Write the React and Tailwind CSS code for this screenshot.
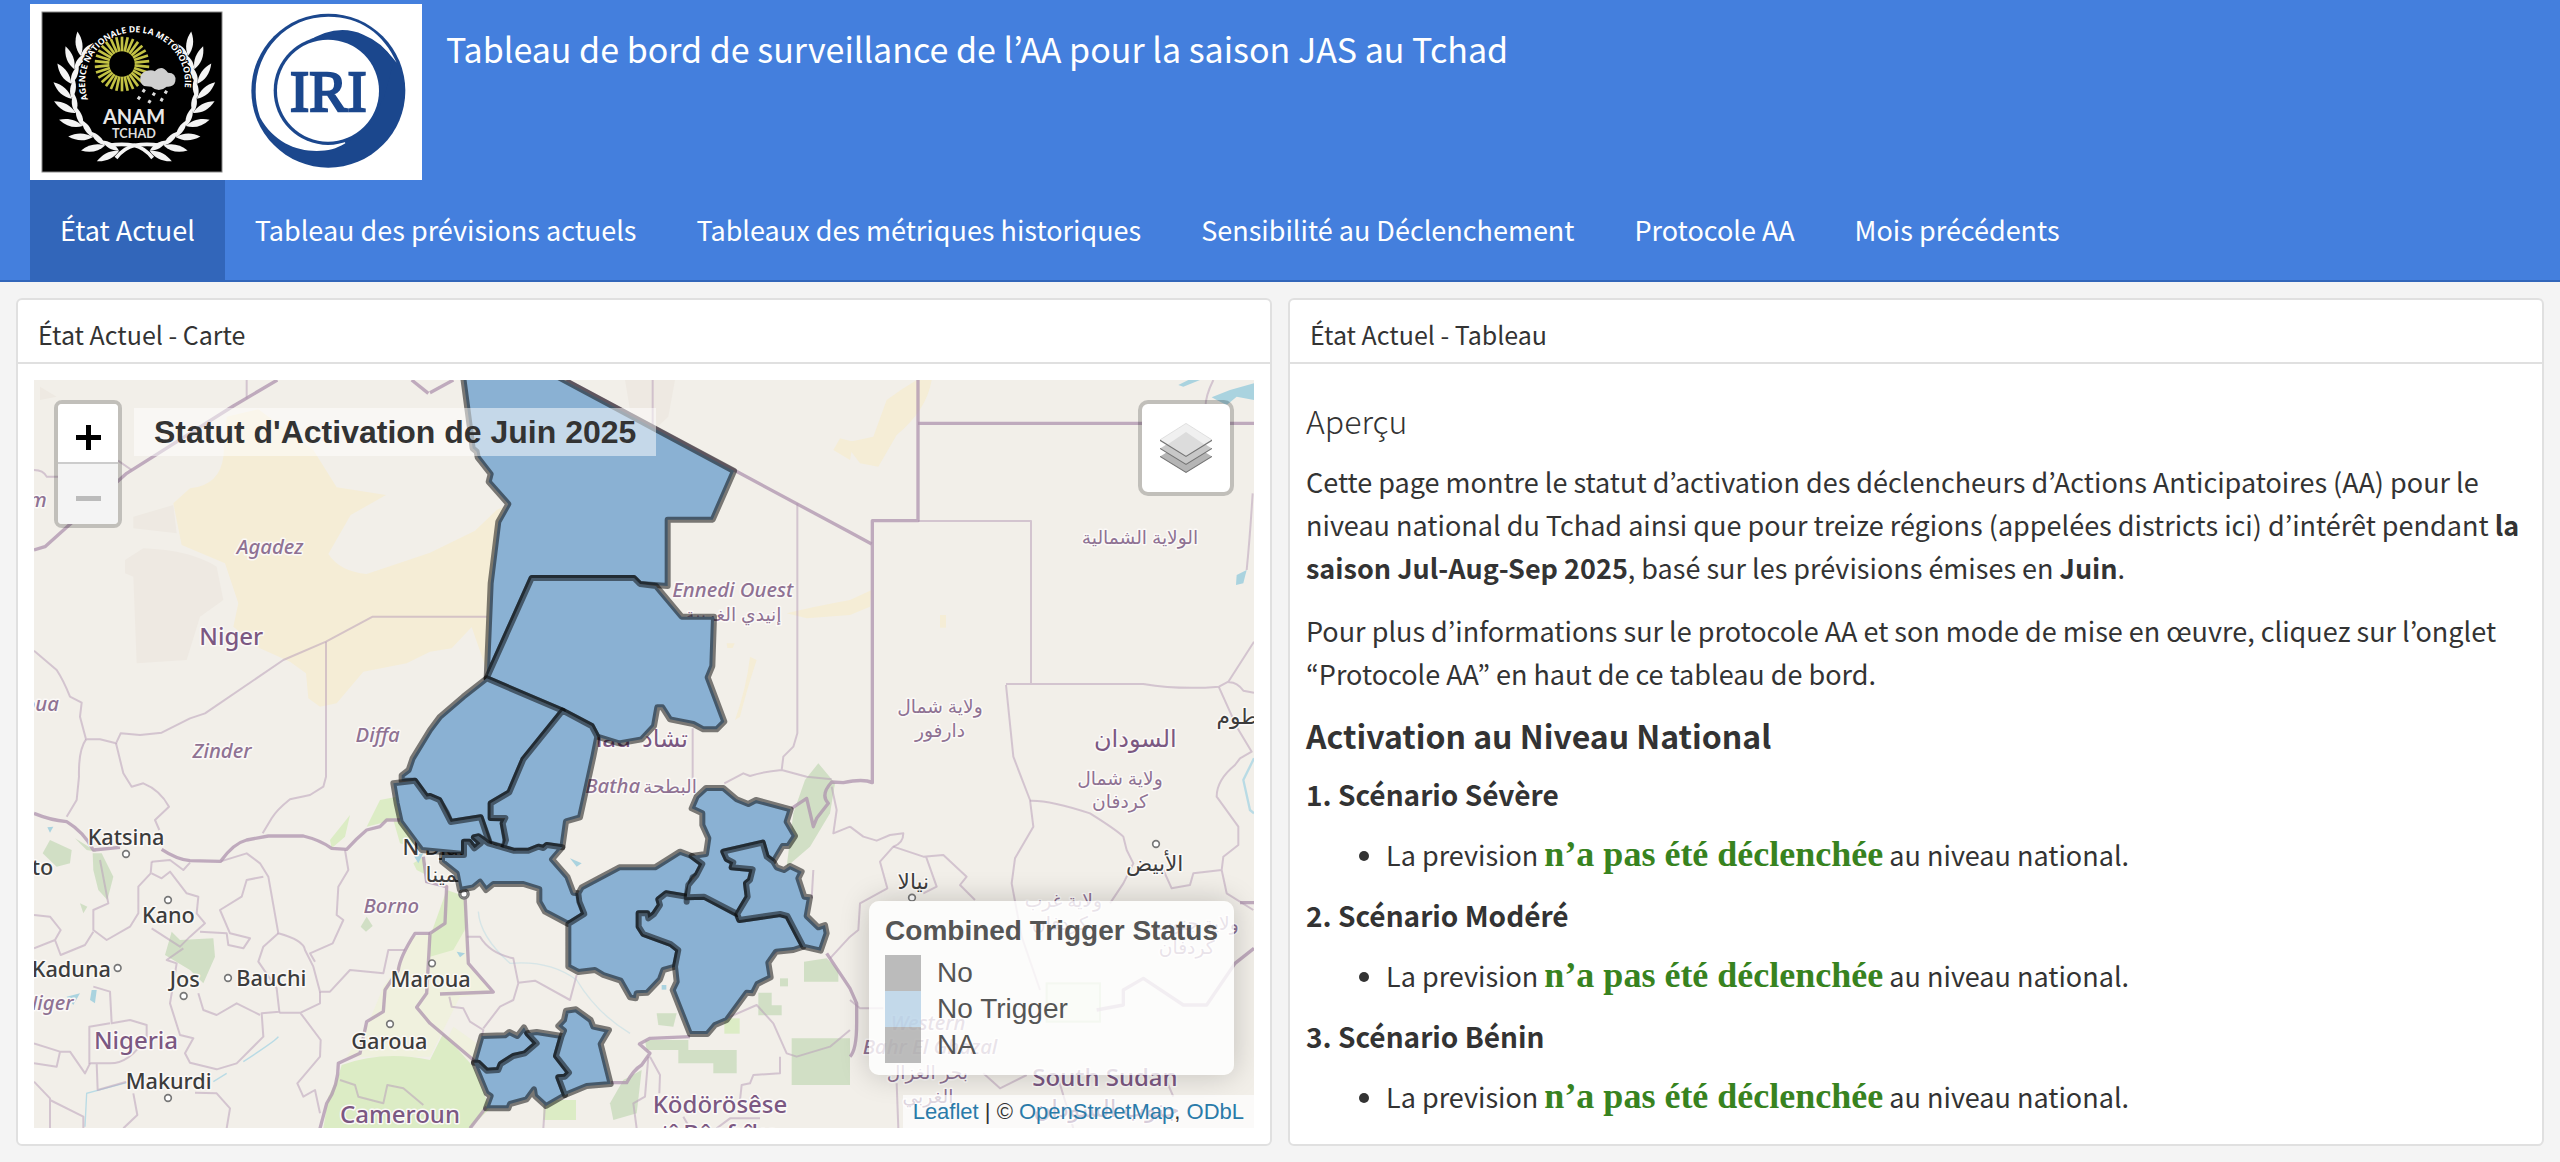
import React from "react";

const SANS = "font-['Noto_Sans_CJK_KR','Open_Sans',sans-serif]";

const LEAVES = Array.from({ length: 9 }, (_, i) => i);

function AnamLogo() {
  const rays = Array.from({ length: 30 }, (_, i) => i * 12);
  const leaf = "M0 0 C-14 -18 -18 -40 -10 -66 C4 -46 8 -22 0 0Z";
  const branch = LEAVES.map((i) => {
    const a = ((104 + i * 13.5) * Math.PI) / 180;
    const x = 403 + 190 * Math.cos(a);
    const y = 268 + 190 * Math.sin(a);
    const dir = 104 + i * 13.5 + 180;
    return (
      <g key={i} transform={`translate(${x} ${y})`}>
        <path d={leaf} transform={`rotate(${dir - 30}) scale(1.2 1.1)`} />
        <path d={leaf} transform={`rotate(${dir + 26}) scale(1 .9)`} />
      </g>
    );
  });
  return (
    <g>
      <rect x="126" y="36" width="540" height="480" fill="#000" stroke="#888" strokeWidth="3" />
      <g fill="#f4f4f4">
        {branch}
        <g transform="translate(806 0) scale(-1 1)">{branch}</g>
      </g>
      <g fill="none" stroke="#f4f4f4" strokeWidth="11">
        <path d="M348 474 Q372 444 404 436 Q440 430 480 436" />
        <path d="M458 474 Q434 444 402 436 Q366 430 326 436" />
      </g>
      <path id="anam-arc" d="M264 298 A150 150 0 1 1 530 330" fill="none" />
      <text fill="#fff" fontSize="30" fontWeight="700" fontFamily="Liberation Sans Narrow, Open Sans, sans-serif" stroke="#000" strokeWidth="6" paintOrder="stroke">
        <textPath href="#anam-arc">
          <tspan fontSize="26">AGENCE NATIONALE DE LA METOROLOGIE</tspan>
        </textPath>
      </text>
      <g stroke="#c3c244" strokeWidth="8">
        {rays.map((r) => (
          <path key={r} d="M366 154 V110" transform={`rotate(${r} 366 192)`} />
        ))}
      </g>
      <path d="M432 258 a25 25 0 0 1 4 -44 q20 -6 28 0 q22 -22 40 4 q26 0 22 26 q-4 18 -26 16 q-24 20 -46 0z" fill="#cfcfcf" />
      <g stroke="#ddd" strokeWidth="9" strokeDasharray="10 16">
        <path d="M434 268 L410 304" />
        <path d="M464 278 L442 316" />
        <path d="M500 272 L478 312" />
      </g>
      <text x="402" y="371" textAnchor="middle" fill="#e8e8e8" fontSize="60" fontWeight="700" fontFamily="Lato, sans-serif">ANAM</text>
      <text x="402" y="414" textAnchor="middle" fill="#ddd" fontSize="38" fontWeight="700" fontFamily="Lato, sans-serif">TCHAD</text>
    </g>
  );
}

function Logos() {
  return (
    <svg viewBox="90 12 1176 528" className="block h-[176px] w-[392px] bg-white" role="img" aria-label="ANAM Tchad, IRI">
      <AnamLogo />
      <circle cx="985" cy="272" r="231" fill="#1b478d" />
      <path d="M1190 188 C1150 100 1080 50 985 50 C860 50 767 150 767 275 C767 300 771 325 780 352 C820 425 885 453 950 453 C985 453 1008 447 1036 430 L930 125 Q985 85 1050 95 Q1130 110 1190 188Z" fill="#fff" />
      <circle cx="984" cy="272" r="163" fill="#1b478d" />
      <path d="M920 126 Q1010 68 1090 104 Q1150 128 1182 182 L1150 300 L1040 420 Z" fill="#1b478d" />
      <circle cx="984" cy="272" r="153" fill="#fff" />
      <text x="985" y="334" textAnchor="middle" fill="#1b478d" stroke="#1b478d" strokeWidth="7" fontSize="172" fontFamily="Liberation Serif, serif">IRI</text>
    </svg>
  );
}

const NAV = [
  "État Actuel",
  "Tableau des prévisions actuels",
  "Tableaux des métriques historiques",
  "Sensibilité au Déclenchement",
  "Protocole AA",
  "Mois précédents",
];

const DISTRICTS = [
  "1298,10 1328,235 1340,245 1343,262 1382,312 1376,335 1435,402 1405,455 1382,640 1370,925 1505,624 1812,624 1830,642 1913,648 1913,449 2048,449 2112,303 1564,10",
  "1370,925 1505,624 1812,624 1830,642 1878,648 1955,740 2052,740 2047,888 2033,922 2083,1055 2060,1078 2020,1078 1990,1062 1920,1048 1897,1012 1882,1012 1872,1068 1835,1108 1767,1120 1702,1100 1685,1068 1598,1022",
  "1370,925 1598,1022 1480,1168 1438,1267 1382,1300 1382,1344 1426,1346 1418,1360 1428,1420 1422,1432 1380,1420 1352,1342 1262,1356 1250,1328 1228,1290 1200,1278 1190,1280 1155,1232 1115,1232 1115,1216 1136,1200 1148,1165 1200,1080 1230,1040 1300,980",
  "1598,1022 1685,1068 1702,1100 1690,1160 1650,1342 1608,1354 1597,1432 1550,1425 1540,1434 1525,1430 1495,1442 1450,1442 1420,1432 1428,1410 1418,1360 1426,1344 1382,1344 1382,1300 1438,1267 1480,1168",
  "1155,1232 1090,1240 1100,1300 1112,1355 1175,1440 1302,1452 1302,1415 1318,1415 1333,1435 1352,1420 1332,1402 1345,1400 1378,1420 1352,1342 1262,1356 1228,1290 1200,1278 1190,1280",
  "1236,1455 1302,1455 1302,1415 1318,1415 1333,1435 1352,1420 1332,1402 1345,1398 1375,1420 1450,1442 1495,1442 1525,1430 1540,1434 1550,1425 1597,1432 1566,1468 1612,1520 1630,1568 1645,1570 1650,1595 1663,1632 1615,1662 1545,1625 1528,1595 1528,1557 1480,1542 1390,1542 1368,1560 1350,1535 1330,1552 1290,1560 1280,1510 1236,1475",
  "1615,1662 1663,1632 1648,1595 1645,1570 1655,1552 1768,1492 1875,1492 1950,1445 1985,1458 2017,1482 2000,1515 1988,1522 1970,1580 1908,1570 1885,1588 1890,1605 1872,1632 1855,1645 1852,1630 1826,1630 1826,1670 1840,1692 1922,1722 1945,1740 1935,1790 1900,1800 1890,1828 1852,1868 1820,1870 1817,1885 1800,1882 1772,1832 1720,1815 1695,1800 1645,1806 1615,1790",
  "1970,1595 1970,1580 1908,1570 1885,1588 1890,1605 1872,1632 1855,1645 1852,1630 1826,1630 1826,1670 1840,1692 1922,1722 1945,1740 1935,1790 1940,1835 1928,1860 1980,1992 2032,1992 2055,1965 2090,1950 2150,1868 2168,1870 2182,1842 2222,1822 2215,1778 2238,1745 2290,1740 2320,1730 2272,1638 2250,1632 2128,1650 2120,1632 2022,1580 1970,1582",
  "1985,1315 2000,1280 2028,1254 2080,1254 2120,1288 2155,1302 2178,1290 2282,1318 2270,1355 2295,1398 2275,1428 2258,1428 2230,1475 2210,1460 2198,1418 2080,1445 2090,1467 2110,1477 2105,1492 2168,1498 2160,1530 2148,1540 2153,1580 2122,1632 2022,1580 1970,1582 1975,1545 2000,1515 2017,1482 1985,1458 2028,1452 2035,1405 2017,1365 2017,1330",
  "2230,1475 2240,1492 2262,1500 2280,1488 2315,1505 2305,1525 2323,1580 2340,1582 2330,1638 2365,1672 2385,1665 2390,1690 2372,1742 2320,1730 2272,1638 2250,1632 2128,1650 2122,1632 2153,1580 2148,1540 2160,1530 2168,1498 2105,1492 2110,1477 2090,1467 2080,1445 2198,1418 2210,1460",
  "1355,1998 1425,1996 1438,1986 1462,1998 1482,1972 1492,1990 1520,2020 1485,2050 1450,2058 1412,2082 1405,2100 1370,2102 1345,2078 1332,2078",
  "1332,2078 1345,2078 1370,2102 1405,2100 1412,2082 1450,2058 1485,2050 1520,2020 1492,1990 1520,1986 1595,1998 1578,2058 1617,2108 1605,2120 1585,2122 1605,2175 1548,2208 1515,2178 1512,2158 1490,2188 1440,2202 1435,2215 1368,2215 1382,2178 1370,2170",
  "1595,1998 1602,1982 1585,1968 1602,1950 1608,1922 1638,1918 1682,1950 1690,1970 1737,1980 1712,2022 1742,2142 1670,2148 1605,2175 1585,2122 1605,2120 1617,2108 1578,2058",
];

const DESERT = [
  "M590 140 L685 118 L850 240 L920 352 L1068 375 L962 435 L895 552 Q930 605 1010 612 L1200 548 L1335 482 L1400 420 L1420 410 L1400 520 L1370 900 L1300 700 L1345 750 L1265 835 L1200 845 L1130 880 L1000 905 L920 1000 L870 1010 L835 985 L828 910 L780 875 L690 835 L610 770 L625 700 L585 580 L455 525 L430 400 L480 355 Q570 345 580 260Z",
  "M2660 30 L2705 30 Q2690 120 2600 195 L2545 290 L2490 280 L2460 240 L2460 215 L2530 200 L2570 90 Q2610 60 2660 30Z",
  "M2270 730 Q2350 710 2460 690 L2525 660 L2520 710 L2460 735 L2330 745Z",
  "M2410 240 L2430 205 L2470 215 L2460 270Z",
  "M2730 735 h18 v38 h-18z",
  "M2090 820 h24 l-6 14 h-16z",
  "M2160 860 L2180 870 Q2150 960 2130 1040 L2115 1050 Q2150 950 2160 860Z",
];

const SCRUB = [
  "M310 440 L430 405 L440 490 L310 475Z",
  "M340 535 Q480 540 560 590 L580 690 L510 740 L470 870 L320 880 L310 620 L285 610 L285 570Z",
  "M30 50 L80 80 L30 90Z",
  "M1785 30 H1935 L1915 140 L1860 190 L1800 120Z",
];

const FOREST = [
  "M60 1410 L125 1440 L120 1480 L80 1490 L38 1450Z",
  "M188 1450 L215 1450 L250 1520 L232 1590 L205 1560 L190 1500Z",
  "M135 1405 L200 1445 L170 1440Z",
  "M425 1685 L450 1710 L550 1705 L555 1760 L520 1840 L480 1800 L405 1755Z",
  "M1010 1640 L1028 1668 L1008 1685 L992 1670Z",
  "M150 1600 L172 1610 L160 1630Z",
  "M1880 1930 L1940 1930 L1930 1970 L1885 1965Z",
  "M2285 2005 H2460 V2145 H2285Z",
  "M2250 1825 h24 v24 h-24z",
  "M2325 1230 L2365 1180 L2415 1240 L2400 1330 L2340 1430 L2270 1490 L2290 1330Z",
  "M1740 2200 L1780 2130 L1835 2100 L1820 2230 L1750 2250Z",
  "M1845 2010 H1975 V2040 H2120 V2110 H2050 V2080 H1945 V2040 H1850Z",
  "M2185 1868 h40 v38 h30 v30 h-70z",
  "M2322 1775 L2390 1765 L2425 1800 V1835 H2322Z",
];

const GRASS = [
  "M935 2085 Q1060 2040 1200 2070 L1240 1990 L1330 2090 L1380 2215 L1320 2275 H880 L895 2180 L925 2120Z",
  "M1050 1290 L1100 1280 L1140 1400 L1180 1440 L1110 1420 L1090 1350 L1010 1370Z",
  "M900 1410 L960 1335 L945 1400 L905 1435Z",
  "M1250 1560 L1310 1580 L1310 1670 L1270 1740 L1200 1760 L1200 1700Z",
  "M1150 1480 L1180 1460 L1200 1520 L1160 1500Z",
  "M2083 1945 h46 v46 h-46z",
  "M1540 2190 h98 v60 h-98z",
];

const PALE_GRASS = [
  "M1150 1700 L1200 1690 L1310 1670 L1320 1790 L1390 1870 L1290 1880 L1200 2060 L950 2060 L1015 1960 L1060 1850 L1110 1780Z",
  "M1340 2020 L1270 1970 L1250 2010 L1330 2080Z",
];

const MAJOR_BORDERS = [
  "M742 30 L610 108 L290 310 L110 472 L45 530 L12 540",
  "M1200 68 L1270 30",
  "M1145 30 L1195 70",
  "M1610 30 L2112 300 L2460 487 L2525 522",
  "M2664 30 V452 H2527 V1238 Q2500 1225 2440 1238 L2405 1236 Q2370 1275 2395 1300 L2360 1345 L2350 1370 L2330 1285 L2285 1315",
  "M2664 160 H3672",
  "M12 1330 Q60 1350 110 1355 Q160 1385 190 1440 L270 1432 M395 1438 Q440 1468 480 1472 L572 1474 Q610 1420 650 1410 L715 1398 L820 1398 Q870 1410 905 1435 L950 1438 Q980 1405 1010 1380 L1050 1370 L1070 1350 L1110 1350",
  "M1200 1690 L1155 1690 Q1110 1760 1105 1800 L1065 1860 L1060 1925 L1010 1955 L990 2050 L925 2080 Q925 2150 890 2200 L870 2275",
  "M1180 1460 L1190 1535 L1250 1550 L1245 1660 L1200 1690 L1190 1870 L1160 1912 L1200 1960 L1340 2078",
  "M1305 1575 L1315 1780 L1390 1866 L1230 1872",
  "M1742 2138 H1790 Q1810 2100 1835 2085 L1860 2050 L1828 2022 L1860 2005 L1980 2000",
  "M2390 1750 L2460 1855 L2480 1900 V1960 Q2480 2040 2460 2060",
  "M2200 1780 L2240 1740",
  "M3630 1598 H3672 M3672 1735 L3615 1780 L3530 1905 H3460 L3340 1825 L3280 1860 V1905 L3200 1920",
  "M1320 2275 L1370 2210",
];

const MINOR_BORDERS = [
  "M650 30 V86",
  "M12 300 Q40 300 50 320 H84 M264 272 L305 300",
  "M1370 740 H1028 L888 815 L760 870 L525 1030 L480 1045 L395 1088 L330 1095 L272 1090 L258 1120 L210 1108 H168 L150 1040 L155 998 L120 980 Q100 930 80 900 L12 842",
  "M888 815 V1220 L880 1250 L840 1275 L780 1288 Q740 1320 725 1345 L698 1390",
  "M168 1108 Q145 1140 147 1220 L140 1290 L110 1340",
  "M258 1120 L280 1210 L305 1250 L340 1240 Q390 1260 417 1310 L375 1350 L388 1380",
  "M1370 925 L1260 1040",
  "M1868 30 V210",
  "M2302 400 V1090 L2290 1130 L2260 1160 L2255 1200 Q2200 1205 2160 1218 L2140 1210 L2083 1240 M2255 1200 L2330 1220 L2405 1228",
  "M1988 1075 V1255",
  "M2664 453 H3003 V942 M2928 942 H3340 Q3450 960 3567 950 L3595 935 L3672 815 M3595 937 Q3620 935 3640 962 L3672 968",
  "M2928 945 L2950 1160 L3000 1290 L3010 1370 L2955 1465 L2945 1540 L2975 1700 L3030 1860",
  "M3567 952 L3620 1070 L3665 1145 L3630 1165 L3615 1185 Q3560 1230 3560 1280 L3625 1370 V1425 L3580 1460 L3575 1500 L3490 1510 L3480 1545 L3425 1555 L3400 1500 M3575 1500 L3590 1570 L3670 1620",
  "M3550 30 Q3520 90 3528 130 M3668 370 Q3660 500 3650 600",
  "M3000 1292 Q3060 1290 3180 1330 Q3260 1380 3280 1400 L3290 1440 L3310 1480 L3280 1540 L3240 1600",
  "M2460 1370 L2500 1400 L2540 1412 L2580 1395 L2620 1390 Q2620 1420 2590 1430 L2550 1475 L2572 1555 L2490 1600 L2485 1680 L2460 1700",
  "M2590 1430 L2680 1460 L2740 1455 L2810 1520 L2790 1545 L2835 1590 M2688 1460 L2720 1550 L2680 1570",
  "M365 1475 L362 1510 L325 1550 V1630 L300 1670 L230 1710 L190 1680 L190 1620 L235 1600 L210 1470",
  "M365 1475 L420 1470 L460 1500 L480 1478 M365 1510 L395 1525 L420 1505 L470 1570 L505 1580 L500 1630 L525 1660 L480 1700 L450 1730 L365 1675",
  "M572 1474 L650 1450 L690 1480 L715 1520 L745 1690 Q820 1710 825 1740 L850 1790 L870 1865 H900 L960 1800 L1060 1810 L1075 1740 L1125 1740",
  "M700 1520 L650 1530 L635 1580 L570 1620 L600 1690 L660 1705 L640 1735 L595 1725 L590 1690 L510 1685",
  "M945 1440 L955 1500 L925 1550 L920 1635 L940 1650 L908 1720 L840 1750 L855 1775",
  "M745 1690 L700 1730 L685 1775 L740 1855 L748 1925 L695 1930 L700 2000 L620 2080 L560 2098 L480 2078 L465 2050 L490 2005 L450 1995 L420 1900 L440 1780 L410 1770 L460 1735",
  "M748 1928 H812 L870 1900 V1865 M812 1930 L872 2010 L870 2060 L802 2140 L820 2180 L855 2160 L870 2230",
  "M505 1870 L520 1920 L560 1935 L620 1900 L690 1935",
  "M190 1850 L240 1865 L245 1960 L300 1950 L350 1965 V2000 Q300 2080 240 2080 H178 V1970 L240 1960 M200 2080 L203 2160 L290 2135",
  "M12 1635 L60 1640 L92 1680 L75 1710 L12 1735 M75 1710 L92 1755 L165 1725 L190 1685",
  "M12 2020 L90 2045 L120 2045 L165 2110 L180 2080 M12 2080 L80 2090 L90 2045 M12 2135 L60 2185 V2275 M60 2190 L160 2240 V2275 M310 2170 L322 2235 L280 2275 M495 2168 L560 2170 L600 2215 L590 2275",
  "M930 2130 L975 2145 L985 2180 L1060 2200 L1072 2145 L1120 2155 L1180 2205",
  "M1310 1700 L1350 1700 Q1380 1750 1450 1765 L1465 1840 L1450 1890 L1410 1910 L1360 1975 M1465 1838 L1515 1832 L1620 1890 L1640 1815",
  "M1258 1880 L1265 1910 L1300 1915 L1320 1955 L1360 1980 L1355 2000",
  "M1855 2060 L1845 2180 L1810 2200 L1820 2275 M1860 2060 L1890 2115 L1888 2170 M1545 2200 L1540 2275",
  "M2055 1960 L2180 1905 L2230 1960 L2270 2050 L2300 2060 L2400 2030 L2460 1980 M2250 2060 V2110 L2170 2115 L2160 2140 L2135 2145 L2130 2190 M1980 2275 L1960 2240 M2060 2275 L2100 2245 H2190",
  "M2400 1765 L2460 1700 M2460 1890 L2490 1915 H2560",
  "M2405 1250 L2420 1320 L2410 1390 L2460 1370 M2345 1585 L2350 1500",
  "M2600 2140 L2605 2275 M2860 2110 L2910 2155 L2990 2115",
  "M3080 2110 L3130 2275 M3400 2110 L3430 2180",
];

const WATER = [
  "M3545 82 L3600 60 L3672 40 L3672 90 L3620 80 L3590 105 L3560 90Z",
  "M3445 45 L3475 30 H3510 L3460 50Z",
  "M3620 615 L3650 600 L3640 640 L3618 645Z",
  "M110 1880 L150 1870 L130 1905Z",
  "M185 1860 L200 1860 L195 1900 L180 1890Z",
  "M1620 1465 L1655 1480 L1640 1490Z",
  "M1895 1845 h14 v14 h-14z",
  "M52 1372 L70 1370 L60 1388Z",
  "M1150 1455 L1180 1450 L1165 1480Z",
  "M1280 1745 L1305 1750 L1290 1762Z",
];

const REGION_LABELS = [
  [720, 552, "Agadez"], [1043, 1116, "Diffa"], [576, 1164, "Zinder"], [1084, 1628, "Borno"],
  [2108, 680, "Ennedi Ouest"], [1748, 1268, "Batha"], [54, 1920, "Niger"], [34, 1022, "oua"], [6, 410, "am"],
  [2694, 1980, "Western"], [2700, 2052, "Bahr El Ghazal"],
];
const ARABIC_REGIONS = [
  [2110, 752, "إنيدي الغربية"], [1920, 1268, "البطحة"], [3330, 522, "الولاية الشمالية"], [2730, 1030, "ولاية شمال"],
  [2730, 1102, "دارفور"], [3270, 1245, "ولاية شمال"], [3270, 1315, "كردفان"], [3100, 1610, "ولاية غرب"],
  [3090, 1680, "كردفان"], [3500, 1680, "ولاية جنوب"], [3470, 1752, "كردفان"], [2692, 2128, "بحر الغزال"], [2694, 2200, "الغربي"],
];
const COUNTRY_LABELS = [
  [604, 824, "Niger"], [318, 2038, "Nigeria"], [1110, 2258, "Cameroun"], [2070, 2228, "Ködörösêse"],
  [2070, 2316, "tî Bêafrîka"], [3225, 2148, "South Sudan"], [1905, 1130, "تشاد"], [1702, 1130, "Tchad"], [3316, 1130, "السودان"],
  [3230, 2240, "جنوب السودان"],
];
const CITY_LABELS = [
  [288, 1426, "Katsina"], [415, 1660, "Kano"], [124, 1820, "Kaduna"], [464, 1852, "Jos"], [724, 1848, "Bauchi"],
  [1202, 1852, "Maroua"], [1078, 2038, "Garoua"], [416, 2158, "Makurdi"], [-38, 1516, "Sokoto"],
  [1290, 1454, "N'Djamena"], [1274, 1535, "انجمينا"], [2650, 1556, "نيالا"], [3374, 1502, "الأبيض"], [3680, 1062, "الخرطوم"],
];
const CITY_DOTS = [
  [288, 1452], [414, 1590], [263, 1794], [461, 1878], [594, 1824], [1080, 1962], [414, 2184],
  [1302, 1572], [2646, 1583], [3378, 1422], [1206, 1780],
];

function Labels({ items, size, fill, italic }) {
  return items.map(([x, y, t]) => (
    <text key={t + x + y} x={x} y={y} fontSize={size} fill={fill} fontStyle={italic ? "italic" : "normal"}>{t}</text>
  ));
}

function Shapes({ items, ...rest }) {
  return <g {...rest}>{items.map((d) => <path key={d} d={d} />)}</g>;
}

function MapCanvas() {
  return (
    <svg viewBox="12 30 3660 2244" preserveAspectRatio="xMidYMid slice" className="absolute inset-0 h-full w-full" role="img" aria-label="Carte du Tchad">
      <rect x="0" y="0" width="3700" height="2300" fill="#f2efe9" />
      <Shapes items={SCRUB} fill="#eee9e2" />
      <Shapes items={DESERT} fill="#f5edd6" />
      <Shapes items={PALE_GRASS} fill="#f0f1de" />
      <Shapes items={GRASS} fill="#dcecc5" />
      <Shapes items={FOREST} fill="#c6dab8" fillOpacity=".75" />
      <rect x="3050" y="1840" width="160" height="115" fill="#e5eedb" stroke="#c6dab8" strokeWidth="6" />
      <Shapes items={WATER} fill="#aad3df" />
      <g fill="none" stroke="#b9dbe5" strokeWidth="4">
        <path d="M3672 1165 L3640 1230 L3660 1320 L3672 1330" strokeWidth="7" />
        <path d="M165 2270 L170 2170 L290 2138 M550 2135 L590 2110 M640 2075 Q740 2010 745 2000" />
        <path d="M1345 1625 Q1350 1700 1440 1780 Q1560 1770 1640 1830 Q1700 1930 1800 1990" strokeOpacity=".5" />
      </g>
      <Shapes items={MINOR_BORDERS} fill="none" stroke="#b9a0b9" strokeOpacity=".55" strokeWidth="6" strokeLinejoin="round" />
      <Shapes items={MAJOR_BORDERS} fill="none" stroke="#ae93ae" strokeOpacity=".75" strokeWidth="10" strokeLinejoin="round" />
      <g fontFamily="'Noto Sans', 'DejaVu Sans', sans-serif" textAnchor="middle" stroke="#fbf9f7" strokeWidth="9" strokeLinejoin="round" paintOrder="stroke">
        <g fontWeight="500">
          <Labels items={REGION_LABELS} size="61" fill="#8f7293" italic />
          <Labels items={ARABIC_REGIONS} size="56" fill="#8f7293" />
          <Labels items={COUNTRY_LABELS} size="72" fill="#7b5882" />
          <Labels items={CITY_LABELS} size="65" fill="#3c3c3c" />
        </g>
      </g>
      <g fill="#fff" stroke="#777" strokeWidth="5">
        {CITY_DOTS.map(([x, y]) => <circle key={x + "-" + y} cx={x} cy={y} r="10" />)}
        <circle cx="1302" cy="1572" r="15" fill="none" />
      </g>
      <g fill="#8ab1d3" stroke="#000" strokeOpacity=".5" strokeWidth="18" strokeLinejoin="round">
        {DISTRICTS.map((p) => <polygon key={p} points={p} />)}
      </g>
    </svg>
  );
}

function LayersIcon() {
  return (
    <svg viewBox="0 0 26 26" className="h-[52px] w-[52px]" aria-hidden="true">
      <g stroke="#747474" strokeWidth=".6">
        <path d="M0 17.2 L13 9.2 L26 17.2 L13 25.2Z" fill="#b5b5b5" stroke="none" />
        <path d="M0 17.2 L13 25.2 L26 17.2" fill="none" />
        <path d="M0 13.2 L13 5.2 L26 13.2 L13 21.2Z" fill="#c8c8c8" stroke="none" />
        <path d="M0 13.2 L13 21.2 L26 13.2" fill="none" />
        <path d="M0 8.9 L13 .7 L26 8.9 L13 17Z" fill="#f0f0f0" stroke="#d0d0d0" strokeWidth=".3" />
        <path d="M3.8 11.2 L13 5 L22.2 11.2 L13 17Z" fill="#dcdcdc" stroke="none" />
        <path d="M0 9.1 L13 17.2 L26 9.1" fill="none" />
      </g>
    </svg>
  );
}

const LEGEND = [
  ["No", "bg-[#a0a0a0]/70"],
  ["No Trigger", "bg-[#abcae3]/70"],
  ["NA", "bg-[#a0a0a0]/70"],
];

function MapPanel() {
  return (
    <div className="relative flex-1 overflow-hidden font-['Liberation_Sans',Arial,sans-serif]">
      <MapCanvas />
      <div className="absolute left-5 top-5 overflow-hidden rounded-lg border-4 border-black/20 bg-clip-padding">
        <button aria-label="Zoom avant" className="flex h-[60px] w-[60px] items-center justify-center border-b-2 border-[#ccc] bg-white pt-2">
          <svg viewBox="0 0 25 25" className="h-[25px] w-[25px]"><path d="M12.500 0V25M0 12.500H25" stroke="#000" strokeWidth="5" /></svg>
        </button>
        <button aria-label="Zoom arrière" disabled className="flex h-[60px] w-[60px] items-center justify-center bg-[#f4f4f4] pt-2">
          <svg viewBox="0 0 25 25" className="h-[25px] w-[25px]"><path d="M0 12.500H25" stroke="#bbb" strokeWidth="5" /></svg>
        </button>
      </div>
      <div className="absolute left-[100px] top-7 bg-white/50 px-5 text-[32px] leading-[48px] font-bold text-[#333]">
        Statut d'Activation de Juin 2025
      </div>
      <button aria-label="Couches" className="absolute right-5 top-5 flex h-24 w-24 items-center justify-center rounded-[10px] border-4 border-black/20 bg-white bg-clip-padding">
        <LayersIcon />
      </button>
      <div className="absolute right-5 bottom-[53px] rounded-[10px] bg-white/80 px-4 py-3 text-[28px] leading-9 text-[#555] shadow-[0_0_30px_rgba(0,0,0,0.2)]">
        <div className="mb-1.5 font-bold">Combined Trigger Status</div>
        <ul>
          {LEGEND.map(([label, color]) => (
            <li key={label} className="flex items-center gap-4">
              <span className={`h-9 w-9 ${color}`} />
              {label}
            </li>
          ))}
        </ul>
      </div>
      <div className="absolute right-0 bottom-0 bg-white/70 px-2.5 text-[22px] leading-[33px] text-[#333]">
        <a href="#leaflet" className="text-[#2a7ba9]">Leaflet</a> | © <a href="#osm" className="text-[#2a7ba9]">OpenStreetMap</a>, <a href="#odbl" className="text-[#2a7ba9]">ODbL</a>
      </div>
    </div>
  );
}

function Card({ title, children }) {
  return (
    <section className="flex min-w-0 flex-1 flex-col rounded-md border-2 border-[#e0e0e0] bg-white">
      <h2 className="border-b-2 border-[#e0e0e0] px-5 pt-[7px] text-[25px] leading-[55px]">{title}</h2>
      <div className="flex flex-1 flex-col p-4">{children}</div>
    </section>
  );
}

const SCENARIOS = ["1. Scénario Sévère", "2. Scénario Modéré", "3. Scénario Bénin"];

function Overview() {
  return (
    <div className="flex flex-col gap-5 pt-5 text-[27px] leading-[43px]">
      <h3 className="text-[32px] leading-10 font-light">Aperçu</h3>
      <p>
        Cette page montre le statut d’activation des déclencheurs d’Actions Anticipatoires (AA) pour le niveau national du
        Tchad ainsi que pour treize régions (appelées districts ici) d’intérêt pendant <b>la saison Jul-Aug-Sep 2025</b>,
        basé sur les prévisions émises en <b>Juin</b>.
      </p>
      <p>
        Pour plus d’informations sur le protocole AA et son mode de mise en œuvre, cliquez sur l’onglet “Protocole AA” en
        haut de ce tableau de bord.
      </p>
      <h3 className="text-[32px] leading-10 font-bold">Activation au Niveau National</h3>
      {SCENARIOS.map((s) => (
        <section key={s} className="flex flex-col gap-5">
          <h4 className="text-[28px] leading-[38px] font-bold">{s}</h4>
          <ul className="list-disc pl-20">
            <li>
              La prevision <b className="font-['Liberation_Serif',serif] text-[36px] leading-none text-[#38831f]">n’a pas été déclenchée</b> au niveau
              national.
            </li>
          </ul>
        </section>
      ))}
    </div>
  );
}

export default function App() {
  return (
    <div lang="fr" className={`flex min-h-screen flex-col bg-[#f4f4f4] text-[#333] ${SANS}`}>
      <header className="border-b-2 border-[#3266ba] bg-[#447fdd] px-[30px] pt-1 text-white">
        <div className="flex gap-6">
          <Logos />
          <h1 className="pt-5 text-[34px] leading-[50px]">Tableau de bord de surveillance de l’AA pour la saison JAS au Tchad</h1>
        </div>
        <nav className="flex">
          {NAV.map((n, i) => (
            <a key={n} href="#page" className={`px-[30px] text-[27px] leading-[100px] ${i === 0 ? "bg-[#3266ba]" : ""}`}>{n}</a>
          ))}
        </nav>
      </header>
      <main className="flex flex-1 gap-4 p-4">
        <Card title="État Actuel - Carte"><MapPanel /></Card>
        <Card title="État Actuel - Tableau"><Overview /></Card>
      </main>
    </div>
  );
}
